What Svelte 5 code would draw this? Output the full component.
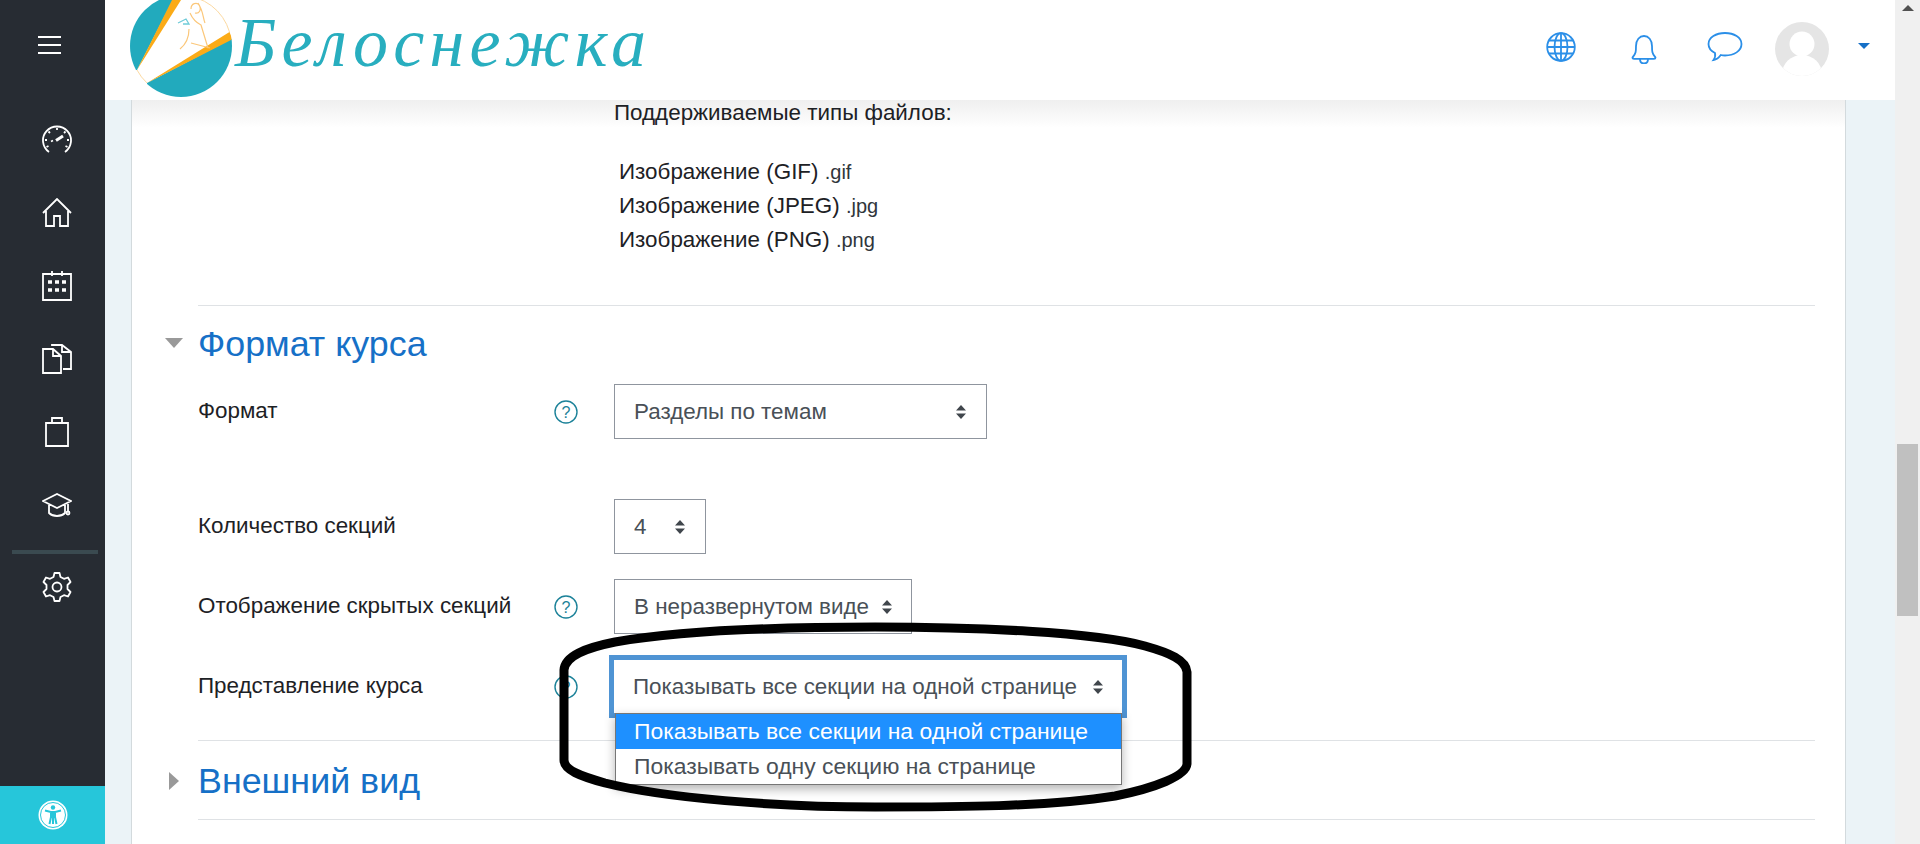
<script>
  const fileTypes = [
    { name: 'Изображение (GIF)', ext: '.gif' },
    { name: 'Изображение (JPEG)', ext: '.jpg' },
    { name: 'Изображение (PNG)', ext: '.png' }
  ];
</script>

{#snippet arrows()}
  <svg class="arrows" width="12" height="16" viewBox="0 0 12 16"><path d="M6 1 L11 6.500 H1 Z M1 9.500 H11 L6 15 Z" fill="#40464c"/></svg>
{/snippet}

{#snippet help()}
  <svg class="help" width="24" height="24" viewBox="0 0 24 24"><circle cx="12" cy="12" r="11" fill="none" stroke="#1c8299" stroke-width="1.400"/><text x="12" y="17.500" text-anchor="middle" font-size="16" font-family="Liberation Sans, sans-serif" fill="#1c8299">?</text></svg>
{/snippet}

<div class="app">
  <aside class="sidebar">
    <button class="burger" aria-label="menu"><span></span><span></span><span></span></button>
    <nav class="nav">
      <svg class="ico" viewBox="0 0 30 30"><path d="M7 27 A14 14 0 1 1 23 27" /><path d="M9 16.500 L11 15.500 M15 3 V5 M27 15 H25 M3 15 H5 M6.500 6.500 L8 8 M23.500 6.500 L22 8 M4.500 22 L6.500 21 M25.500 22 L23.500 21" /><path d="M14 15.500 L21 11" stroke-width="3" /></svg>
      <svg class="ico" viewBox="0 0 30 30"><path d="M1 15 L15 1 L29 15 M4 13 V28 H12 V18 H18 V28 H26 V13" /></svg>
      <svg class="ico" viewBox="0 0 30 30"><path d="M1 3 H29 V29 H1 Z M10 0 V5 M20 0 V5" /><path d="M6 11 H10 M13 11 H17 M20 11 H24 M6 19 H10 M13 19 H17 M20 19 H24" stroke-width="3.500" /></svg>
      <svg class="ico" viewBox="0 0 30 30"><path d="M1 5 H11 L19 12 V29 H1 Z M11 5 V12 H19" /><path d="M10 2 V1 H20 L29 8 V25 H21 M20 1 V8 H29" /></svg>
      <svg class="ico" viewBox="0 0 30 30"><path d="M4 6 H26 V29 H4 Z M10 6 V1 H20 V6" /></svg>
      <svg class="ico" viewBox="0 0 30 30"><path d="M1 11 L15 4 L29 11 L15 18 Z M7 14 V23 C11 27 19 27 23 23 V14 M26 12 V21" /><circle cx="26" cy="23" r="1.500" /></svg>
    </nav>
    <div class="divider"></div>
    <svg class="ico gear" viewBox="0 0 30 30"><circle cx="15" cy="15" r="4.500" /><path d="M12.500 1 H17.500 L18.500 5 L22 6.800 L26 5.500 L28.500 10 L25.500 13 V17 L28.500 20 L26 24.500 L22 23.200 L18.500 25 L17.500 29 H12.500 L11.500 25 L8 23.200 L4 24.500 L1.500 20 L4.500 17 V13 L1.500 10 L4 5.500 L8 6.800 L11.500 5 Z" stroke-linejoin="round" /></svg>
    <div class="access">
      <svg width="30" height="30" viewBox="0 0 30 30"><circle cx="15" cy="15" r="14.500" fill="#fff"/><circle cx="15" cy="15" r="12.500" fill="none" stroke="#26c6da" stroke-width="1"/><circle cx="15" cy="7.500" r="2.200" fill="#26c6da"/><path d="M7 10.500 L13 12 V17 L11.500 24 M23 10.500 L17 12 V17 L18.500 24 M13 12 H17 M13 17 H17 M15 12 V24" fill="none" stroke="#26c6da" stroke-width="2"/></svg>
    </div>
  </aside>

  <div class="main">
    <header class="header">
      <div class="logo">
        <svg class="mark" width="104" height="100" viewBox="0 0 104 100">
          <defs><clipPath id="disc"><circle cx="52" cy="46" r="51" /></clipPath></defs>
          <g clip-path="url(#disc)">
            <rect width="104" height="100" fill="#fff" />
            <path d="M-2 -6 H47 L8 70 H-2 Z" fill="#22aabd" />
            <path d="M18 83 L104 38 V100 H18 Z" fill="#22aabd" />
            <path d="M43 0 H52 L8 70 Z" fill="#fbab17" />
            <path d="M18 83 L100.500 32 L104 39 Z" fill="#fbab17" />
            <path d="M62 9 C62 3 68 2 70 5 C73 10 70 14 66 13 M69 3 C74 10 74 18 76 23 M61 13 C64 20 68 23 72 25 L79 48 M60 29 C60 38 56 45 51 49 M62 43 L81 48" fill="none" stroke="#fbc77a" stroke-width="1.200" />
            <path d="M49 23 L57 19 L60 24 L54 24" fill="none" stroke="#6fcbd8" stroke-width="1.300" />
          </g>
          <path d="M8 70 A50.500 50.500 0 0 0 18 83 M52 -4.500 A50.500 50.500 0 0 1 100.500 32" fill="none" stroke="#fcd9a0" stroke-width="1" />
        </svg>
        <span class="brand">Белоснежка</span>
      </div>
      <div class="tools">
        <svg class="tool globe" width="30" height="30" viewBox="0 0 30 30"><circle cx="15" cy="15" r="13.800" /><ellipse cx="15" cy="15" rx="6.500" ry="13.800" /><path d="M15 1 V29 M3 8.500 H27 M1.500 15 H28.500 M3 21.500 H27" /></svg>
        <svg class="tool bell" width="26" height="30" viewBox="0 0 26 30"><path d="M1.500 23.500 C5 20 5 17 5 12 C5 6 8.500 2 13 2 C17.500 2 21 6 21 12 C21 17 21 20 24.500 23.500 C24.500 24.500 24 24.800 23 24.800 H3 C2 24.800 1.500 24.500 1.500 23.500 Z M9 25 C9 31 17 31 17 25" /></svg>
        <svg class="tool chat" width="36" height="32" viewBox="0 0 36 32"><path d="M18 2 C27 2 34.500 6.500 34.500 13 C34.500 20 27 24.500 18 24.500 C16.500 24.500 15 24.300 13.800 24 C12 26.500 9.500 28.500 6.500 29 C8 27 8.500 24.500 8 22 C4 20 1.500 17 1.500 13 C1.500 6.500 9 2 18 2 Z" /></svg>
        <svg class="avatar" width="54" height="54" viewBox="0 0 54 54">
          <defs><clipPath id="face"><circle cx="27" cy="27" r="27" /></clipPath></defs>
          <g clip-path="url(#face)">
            <rect width="54" height="54" fill="#e5e5e5" />
            <circle cx="27" cy="22" r="12.500" fill="#fff" />
            <ellipse cx="27" cy="52" rx="20" ry="19" fill="#fff" />
          </g>
        </svg>
        <span class="caret"></span>
      </div>
    </header>

    <div class="page">
      <div class="card">
        <section class="files">
          <p class="supported">Поддерживаемые типы файлов:</p>
          <ul>
            {#each fileTypes as f}
              <li>{f.name} <small>{f.ext}</small></li>
            {/each}
          </ul>
        </section>

        <h3 class="section open"><span class="tri down"></span>Формат курса</h3>

        <div class="row r1">
          <span class="label">Формат</span>
          {@render help()}
          <div class="select w1">Разделы по темам {@render arrows()}</div>
        </div>
        <div class="row r2">
          <span class="label">Количество секций</span>
          <span></span>
          <div class="select w2">4 {@render arrows()}</div>
        </div>
        <div class="row r3">
          <span class="label">Отображение скрытых секций</span>
          {@render help()}
          <div class="select w3">В неразвернутом виде {@render arrows()}</div>
        </div>
        <div class="row r4">
          <span class="label">Представление курса</span>
          {@render help()}
          <div class="combo">
            <div class="select focus">Показывать все секции на одной странице {@render arrows()}</div>
            <ul class="dropdown">
              <li class="active">Показывать все секции на одной странице</li>
              <li>Показывать одну секцию на странице</li>
            </ul>
          </div>
        </div>

        <h3 class="section closed"><span class="tri right"></span>Внешний вид</h3>
        <div class="rule"></div>
        <div class="shade"></div>
      </div>
    </div>

    <svg class="ink" width="660" height="210" viewBox="0 0 660 210">
      <path d="M9 52 C10 38 30 30 60 24 C130 12 240 9 320 9 C420 9 540 14 590 28 C615 35 631 42 632 54 V146 C631 158 600 170 560 178 C490 189 400 189 320 189 C220 189 110 180 50 165 C25 158 9 152 9 142 Z" fill="none" stroke="#000" stroke-width="9" stroke-linejoin="round" />
    </svg>
  </div>

  <div class="scrollbar">
    <span class="up"></span>
    <span class="thumb"></span>
  </div>
</div>

<style>
  :global(body) {
    font-family: "Liberation Sans", Arial, sans-serif;
    margin: 0;
    overflow: hidden;
  }

  .app {
    display: flex;
    height: 844px;
    overflow: hidden;
    background: #ebf3f7;
  }

  .sidebar {
    width: 105px;
    flex: none;
    background: #272c33;
    display: flex;
    flex-direction: column;
  }

  .burger {
    background: none;
    border: 0;
    padding: 0;
    margin: 36px 0 0 38px;
    width: 23px;
    display: flex;
    flex-direction: column;
    gap: 6px;
  }

  .burger span {
    display: block;
    height: 2px;
    background: #fff;
  }

  .nav {
    margin-top: 71px;
    display: flex;
    flex-direction: column;
    gap: 43px;
    padding-left: 42px;
  }

  .ico {
    width: 30px;
    height: 30px;
    fill: none;
    stroke: #fff;
    stroke-width: 1.800;
    display: block;
  }

  .divider {
    height: 4px;
    margin: 30px 7px 0 12px;
    background: #3a4a50;
  }

  .gear {
    margin: 18px 0 0 42px;
  }

  .access {
    margin-top: auto;
    height: 58px;
    background: #26c6da;
    display: flex;
    align-items: center;
    justify-content: center;
  }

  .main {
    position: relative;
    flex: 1;
    min-width: 0;
    display: flex;
    flex-direction: column;
  }

  .header {
    height: 100px;
    flex: none;
    background: #fff;
    display: flex;
    justify-content: space-between;
    align-items: flex-start;
    position: relative;
    z-index: 2;
  }

  .logo {
    display: flex;
    align-items: flex-start;
    padding-left: 24px;
  }

  .mark {
    flex: none;
    display: block;
  }

  .brand {
    font-family: "Liberation Serif", serif;
    font-style: italic;
    font-size: 70px;
    line-height: 1;
    letter-spacing: 5.300px;
    color: #28aebf;
    margin: 8px 0 0 2px;
  }

  .tools {
    display: flex;
    align-items: flex-start;
    padding-top: 22px;
  }

  .tool {
    fill: none;
    stroke: #2b8fe8;
    stroke-width: 1.800;
  }

  .globe {
    margin: 10px 0 0 0;
  }

  .bell {
    margin: 12px 0 0 55px;
  }

  .chat {
    margin: 9px 0 0 50px;
  }

  .avatar {
    margin: 0 0 0 32px;
  }

  .caret {
    margin: 21px 25px 0 29px;
    width: 0;
    height: 0;
    border-left: 6.500px solid transparent;
    border-right: 6.500px solid transparent;
    border-top: 6px solid #1670c7;
  }

  .page {
    flex: 1;
    padding: 0 49px 0 26px;
    min-height: 0;
  }

  .card {
    position: relative;
    height: 100%;
    box-sizing: border-box;
    background: #fff;
    border-left: 1px solid #d3dadd;
    border-right: 1px solid #d3dadd;
    padding: 0 30px 0 66px;
    color: #1d2125;
    font-size: 22.400px;
  }

  .shade {
    position: absolute;
    left: 0;
    right: 0;
    top: 0;
    height: 28px;
    background: linear-gradient(#efefef, rgba(255, 255, 255, 0));
    pointer-events: none;
  }

  .files {
    padding: 0 0 0 416px;
    height: 206px;
    box-sizing: border-box;
    border-bottom: 1px solid #dfe2e5;
    position: relative;
    z-index: 1;
  }

  .supported {
    margin: 0;
    line-height: 26px;
  }

  .files ul {
    list-style: none;
    margin: 29px 0 0 5px;
    padding: 0;
  }

  .files li {
    height: 34px;
    line-height: 34px;
  }

  .files small {
    font-size: 20px;
    color: #30363b;
  }

  .section {
    position: relative;
    margin: 0;
    font-weight: 400;
    font-size: 35.840px;
    line-height: 40px;
    color: #1670c7;
  }

  .section.open {
    margin-top: 18px;
  }

  .tri {
    position: absolute;
    width: 0;
    height: 0;
  }

  .tri.down {
    left: -33px;
    top: 14px;
    border-left: 9px solid transparent;
    border-right: 9px solid transparent;
    border-top: 10px solid #999;
  }

  .tri.right {
    left: -29px;
    top: 31px;
    border-top: 9px solid transparent;
    border-bottom: 9px solid transparent;
    border-left: 10px solid #999;
  }

  .row {
    display: grid;
    grid-template-columns: 356px 60px auto;
    align-items: center;
    justify-items: start;
  }

  .label {
    margin-top: -2px;
  }

  .r1 {
    margin-top: 20px;
  }

  .r2 {
    margin-top: 60px;
  }

  .r3 {
    margin-top: 25px;
  }

  .r4 {
    margin-top: 21px;
  }

  .select {
    height: 55px;
    box-sizing: border-box;
    border: 1px solid #8f959e;
    background: #fff;
    color: #495057;
    display: flex;
    align-items: center;
    justify-content: space-between;
    padding: 0 19px;
    font-size: 22.400px;
    white-space: nowrap;
  }

  .w1 {
    width: 373px;
  }

  .w2 {
    width: 92px;
  }

  .w3 {
    width: 298px;
    padding-right: 18px;
  }

  .combo {
    position: relative;
  }

  .select.focus {
    width: 518px;
    height: 63px;
    margin-left: -5px;
    border: 5px solid #4f94d4;
    padding: 0 18px 0 19px;
  }

  .dropdown {
    position: absolute;
    z-index: 1;
    left: 1px;
    top: 58px;
    width: 507px;
    box-sizing: border-box;
    margin: 0;
    padding: 0;
    list-style: none;
    background: #fff;
    border: 1px solid #767676;
    box-shadow: 0 4px 10px rgba(0, 0, 0, 0.3);
    color: #495057;
    font-size: 22.900px;
  }

  .dropdown li {
    height: 35px;
    line-height: 35px;
    padding-left: 18px;
    white-space: nowrap;
  }

  .dropdown li.active {
    background: #1e90ff;
    color: #fff;
  }

  .section.closed {
    border-top: 1px solid #dfe2e5;
    margin-top: 22px;
    padding-top: 20px;
  }

  .rule {
    height: 1px;
    background: #dfe2e5;
    margin-top: 18px;
  }

  .ink {
    position: absolute;
    z-index: 3;
    left: 450px;
    top: 618px;
    pointer-events: none;
  }

  .arrows {
    flex: none;
  }

  .help {
    display: block;
  }

  .scrollbar {
    width: 25px;
    flex: none;
    background: #f0f0f0;
    display: flex;
    flex-direction: column;
    align-items: center;
  }

  .up {
    margin-top: 5px;
    width: 0;
    height: 0;
    border-left: 6px solid transparent;
    border-right: 6px solid transparent;
    border-bottom: 6px solid #505050;
  }

  .thumb {
    margin-top: 433px;
    width: 21px;
    height: 172px;
    background: #c0c0c0;
  }
</style>
